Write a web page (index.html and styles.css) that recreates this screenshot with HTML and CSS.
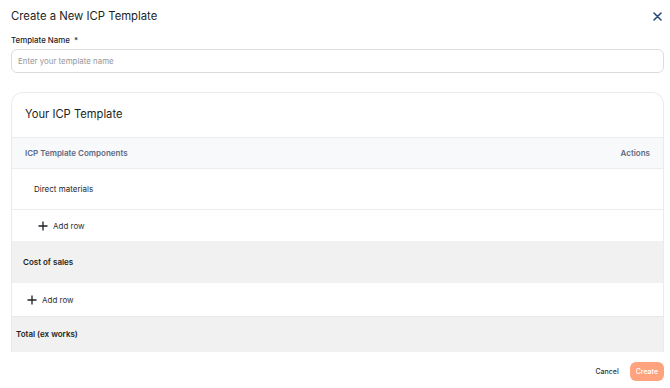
FILE: index.html
```html
<!DOCTYPE html>
<html>
<head>
  <meta charset="utf-8">
  <title>Create a New ICP Template</title>
  <link rel="stylesheet" href="styles.css">
</head>
<body>
  <div class="modal">
    <div class="modal-header">
      <h1 class="title">Create a New ICP Template</h1>
      <a class="close" aria-label="Close">
        <svg width="9" height="9" viewBox="0 0 9 9">
          <path d="M1 1L8 8M8 1L1 8" stroke="#2b4a7c" stroke-width="1.6" stroke-linecap="round"/>
        </svg>
      </a>
    </div>

    <label class="field-label">Template Name <span class="req">*</span></label>
    <input class="field-input" type="text" placeholder="Enter your template name">

    <div class="card">
      <div class="card-title">Your ICP Template</div>
      <div class="table-head">
        <span>ICP Template Components</span>
        <span>Actions</span>
      </div>
      <div class="row item">Direct materials</div>
      <div class="row add add-inner">
        <svg class="plus" width="10" height="10" viewBox="0 0 10 10">
          <path d="M5 0.5V9.5M0.5 5H9.5" stroke="#1c1f24" stroke-width="1.3"/>
        </svg>
        Add row
      </div>
      <div class="row group">Cost of sales</div>
      <div class="row add add-outer">
        <svg class="plus" width="10" height="10" viewBox="0 0 10 10">
          <path d="M5 0.5V9.5M0.5 5H9.5" stroke="#1c1f24" stroke-width="1.3"/>
        </svg>
        Add row
      </div>
      <div class="row total">Total (ex works)</div>
    </div>

    <div class="modal-footer">
      <a class="btn-cancel">Cancel</a>
      <a class="btn-create">Create</a>
    </div>
  </div>
</body>
</html>
```

FILE: styles.css
```css
* {
  box-sizing: border-box;
}
body {
  margin: 0;
  font-family: Inter, "Noto Sans", sans-serif;
  color: #1f2329;
  background: #fff;
}
.modal {
  padding: 6px 6px 0 11px;
}
.modal-header {
  display: flex;
  justify-content: space-between;
  align-items: center;
  height: 20px;
}
.title {
  margin: 0;
  font-size: 11.3px;
  font-weight: 400;
  color: #1c1f24;
}
.close {
  display: flex;
  padding-right: 2px;
  cursor: pointer;
}
.field-label {
  display: block;
  margin-top: 8px;
  font-size: 7.9px;
  font-weight: 500;
  line-height: 12px;
  color: #1f2328;
}
.field-label .req {
  margin-left: 2px;
}
.field-input {
  display: block;
  width: 100%;
  height: 24px;
  margin-top: 3px;
  padding: 0 6px;
  border: 1px solid #dcdcdc;
  border-radius: 6px;
  font-family: inherit;
  font-size: 7.9px;
  outline: none;
}
.field-input::placeholder {
  color: #94979d;
}
.card {
  margin-top: 19px;
  border: 1px solid #ebebeb;
  border-bottom: none;
  border-radius: 12px 12px 0 0;
}
.card-title {
  height: 44px;
  padding-left: 13px;
  padding-bottom: 2px;
  display: flex;
  align-items: center;
  font-size: 11.2px;
  color: #1c1f24;
}
.table-head {
  display: flex;
  justify-content: space-between;
  align-items: center;
  height: 32px;
  padding: 0 13px 0 13px;
  background: #f8f9fb;
  border-top: 1px solid #ebecef;
  border-bottom: 1px solid #ebecef;
  font-size: 8px;
  font-weight: 600;
  color: #5d6a82;
}
.row {
  display: flex;
  align-items: center;
  font-size: 8px;
}
.item {
  height: 41px;
  padding-left: 22px;
  color: #24272d;
  border-bottom: 1px solid #ececec;
}
.add {
  color: #2e3136;
}
.add .plus {
  margin-right: 5px;
}
.add-inner {
  height: 31px;
  padding-left: 26px;
}
.add-outer {
  height: 33px;
  padding-left: 15px;
}
.group {
  height: 42px;
  padding-left: 11px;
  background: #f1f1f1;
  font-weight: 600;
  color: #1b1e22;
}
.total {
  height: 36px;
  padding-left: 4px;
  padding-bottom: 2px;
  background: #f1f1f1;
  border-top: 1px solid #e8e8e8;
  font-weight: 600;
  color: #1b1e22;
}
.modal-footer {
  display: flex;
  justify-content: flex-end;
  align-items: center;
  gap: 11px;
  margin-top: 10px;
}
.btn-cancel {
  font-size: 7px;
  font-weight: 500;
  color: #2e3136;
  cursor: pointer;
}
.btn-create {
  display: flex;
  align-items: center;
  height: 19px;
  padding: 0 6px;
  border-radius: 6px;
  background: #ffa27e;
  color: #fff;
  font-size: 7px;
  font-weight: 500;
  cursor: pointer;
}
```
